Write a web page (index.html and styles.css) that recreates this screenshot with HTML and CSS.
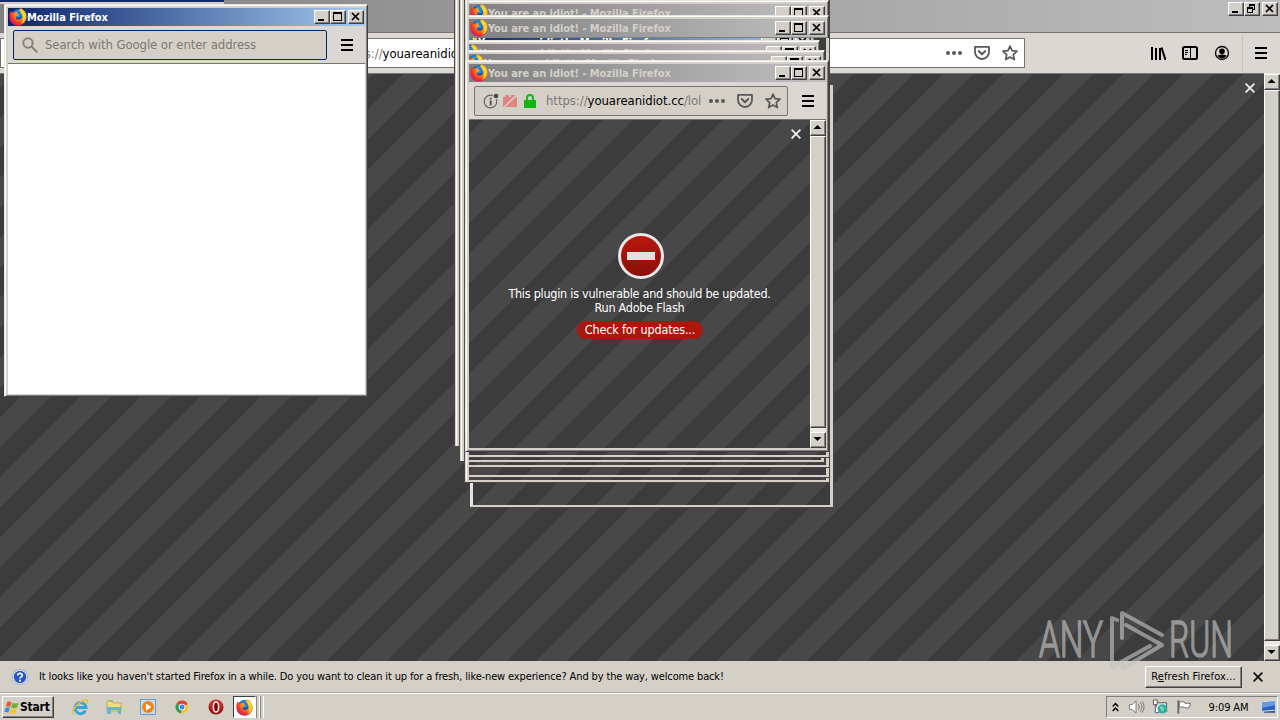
FILE: index.html
```html
<!DOCTYPE html>
<html lang="en">
<head>
	<meta charset="UTF-8">
	<title>You are an idiot! - Mozilla Firefox</title>
	<link rel="stylesheet" href="styles.css">
</head>
<body>
	<!-- shared icons -->
	<svg class="defs" width="0" height="0">
		<defs>
			<radialGradient id="fox" cx="70%" cy="25%" r="85%">
				<stop offset="0" stop-color="#ffe226"/>
				<stop offset=".4" stop-color="#ff980e"/>
				<stop offset=".75" stop-color="#f5302c"/>
				<stop offset="1" stop-color="#c3147d"/>
			</radialGradient>
			<radialGradient id="redball" cx="50%" cy="30%" r="70%">
				<stop offset="0" stop-color="#f0524a"/>
				<stop offset="1" stop-color="#8e0808"/>
			</radialGradient>
			<linearGradient id="stop" x1="0" y1="0" x2="0" y2="1">
				<stop offset="0" stop-color="#b8180f"/>
				<stop offset="1" stop-color="#8a0f08"/>
			</linearGradient>
		</defs>
		<symbol id="i-firefox" viewBox="0 0 16 16">
			<circle cx="8.3" cy="8" r="7" fill="#1b49a5"/>
			<circle cx="8" cy="5" r="3.6" fill="#1a86e0"/>
			<path fill="url(#fox)" d="M1.2 2.6 3 4.2C3.800 3.700 4.800 3.600 5.700 3.900L7.500 3 7.300 5 9 6.200 6.600 7.300 6 8.800C7 10.800 10.500 11 11.500 8.500 12.200 6.500 11 4 9 2.200 8.800 1 10.500.3 10.500.3 14 2 15.900 5 15.700 8.500 15.400 12.600 12.200 15.800 8 15.800 3.800 15.800.5 12.500.4 8.300.3 6 .6 4.300 1.200 2.600z"/>
			<path fill="#ffd52e" d="M11 1.500C14 3.500 15.500 6.500 14.800 9.800 14 12.500 12 13.800 10.500 14 13 11.500 13.700 7 11 1.500z"/>
		</symbol>
		<symbol id="i-min" viewBox="0 0 16 14"><path fill="#000" d="M4 9h6v2H4z"/></symbol>
		<symbol id="i-max" viewBox="0 0 16 14"><path fill="#000" fill-rule="evenodd" d="M3 2h9v9H3zM4 4v6h7V4z"/></symbol>
		<symbol id="i-restore" viewBox="0 0 16 14"><path fill="#000" fill-rule="evenodd" d="M5 2h6v6H9v3H3V5h2zM6 4v1h3v2h1V4zM4 7v3h4V7z"/></symbol>
		<symbol id="i-close" viewBox="0 0 16 14"><path stroke="#000" stroke-width="1.700" d="M4 3l7 7M11 3l-7 7"/></symbol>
		<symbol id="i-menu" viewBox="0 0 12 12"><path fill="#000" d="M0 0h12v2H0zM0 5h12v2H0zM0 10h12v2H0z"/></symbol>
		<symbol id="i-dots" viewBox="0 0 16 16"><g fill="#5a5856"><circle cx="2" cy="8" r="2"/><circle cx="8" cy="8" r="2"/><circle cx="14" cy="8" r="2"/></g></symbol>
		<symbol id="i-pocket" viewBox="0 0 16 16">
			<path fill="none" stroke="#5a5856" stroke-width="1.800" stroke-linejoin="round" d="M1 1.900h14V7a7 7 0 0 1-14 0z"/>
			<path fill="none" stroke="#5a5856" stroke-width="1.900" stroke-linecap="round" stroke-linejoin="round" d="M4.700 6 8 9.200 11.300 6"/>
		</symbol>
		<symbol id="i-star" viewBox="0 0 16 16"><path fill="none" stroke="#5a5856" stroke-width="1.700" stroke-linejoin="round" d="M8 1.100l2 4.600 5 .5-3.700 3.400 1.100 5L8 12l-4.400 2.600 1.100-5L1 6.200l5-.5z"/></symbol>
		<symbol id="i-up" viewBox="0 0 16 14"><path fill="#000" d="M7.500 5 11.500 9h-8z"/></symbol>
		<symbol id="i-down" viewBox="0 0 16 14"><path fill="#000" d="M3.500 5h8l-4 4z"/></symbol>
		<symbol id="i-x" viewBox="0 0 10 10"><path stroke="currentColor" stroke-width="1.800" d="M.6.6l8.800 8.800M9.400.6.6 9.400"/></symbol>
	</svg>

	<div class="desktop">
		<!-- maximised browser window -->
		<div class="main">
			<div class="main-title">
				<div class="btns">
					<span class="btn"><svg><use href="#i-min"/></svg></span><span class="btn"><svg><use href="#i-restore"/></svg></span><span class="btn gap"><svg><use href="#i-close"/></svg></span>
				</div>
			</div>
			<div class="main-bar">
				<div class="main-url">
					<span class="url"><i>https://</i>youareanidiot.cc</span>
					<svg class="ic"><use href="#i-dots"/></svg>
					<svg class="ic"><use href="#i-pocket"/></svg>
					<svg class="ic"><use href="#i-star"/></svg>
				</div>
				<div class="main-tools">
					<svg class="ic" viewBox="0 0 16 16"><path stroke="#000" stroke-width="2" d="M2 2v13M6 3v12M10 3v12M11.500 2.500 15.500 15"/></svg>
					<svg class="ic" viewBox="0 0 16 16"><path fill="none" stroke="#000" stroke-width="2" d="M2.500 2h11Q15 2 15 3.500v9q0 1.500-1.500 1.500h-11Q1 14 1 12.500v-9Q1 2 2.500 2z"/><path stroke="#000" d="M8.500 2v12M3 5.500h3M3 7.500h3M3 9.500h2"/></svg>
					<svg class="ic" viewBox="0 0 16 16"><circle cx="8" cy="8" r="6.500" fill="none" stroke="#000" stroke-width="1.300"/><circle cx="8" cy="6.200" r="2.800"/><path d="M3.500 10.500q4.500-2 9 0-1.500 3-4.500 3t-4.500-3z"/></svg>
					<span class="sep"></span>
					<svg class="menu"><use href="#i-menu"/></svg>
				</div>
			</div>
			<div class="main-view">
				<div class="stripes main-page"><svg class="x"><use href="#i-x"/></svg></div>
				<div class="scroll">
					<span class="btn"><svg><use href="#i-up"/></svg></span>
					<span class="thumb"></span>
					<span class="track"></span>
					<span class="btn"><svg><use href="#i-down"/></svg></span>
				</div>
			</div>
			<div class="notice">
				<svg class="help" viewBox="0 0 16 16"><circle cx="8" cy="8" r="7.500" fill="#eef2fa" stroke="#9db0d4"/><circle cx="8" cy="8" r="6.200" fill="#2456c4"/><path fill="none" stroke="#fff" stroke-width="1.700" d="M5.700 6.400C5.700 3.700 10.300 3.700 10.300 6.300 10.300 8 8 7.800 8 9.600"/><path fill="#fff" d="M7 10.700h2v1.800H7z"/></svg>
				<span class="notice-text">It looks like you haven't started Firefox in a while. Do you want to clean it up for a fresh, like-new experience? And by the way, welcome back!</span>
				<span class="refresh">R<u>e</u>fresh Firefox...</span>
				<svg class="x dark"><use href="#i-x"/></svg>
			</div>
		</div>
		<div class="strip"></div>

		<!-- trails left by the bouncing popups -->
		<div class="frame stripes f1"></div>
		<div class="frame stripes f2"></div>
		<div class="frame stripes f3"></div>
		<div class="frame stripes f4"></div>
		<div class="frame stripes f5"></div>
		<div class="frame stripes f6"></div>
		<div class="frame stripes f7"></div>
		<div class="frame stripes f8"></div>

		<div class="win w1">
			<div class="title"><svg class="fox"><use href="#i-firefox"/></svg><span>You are an idiot! - Mozilla Firefox</span>
				<div class="btns"><span class="btn"><svg><use href="#i-min"/></svg></span><span class="btn"><svg><use href="#i-max"/></svg></span><span class="btn gap"><svg><use href="#i-close"/></svg></span></div>
			</div>
		</div>
		<div class="win active w3">
			<div class="title"><svg class="fox"><use href="#i-firefox"/></svg><span>You are an idiot! - Mozilla Firefox</span>
				<div class="btns"><span class="btn"><svg><use href="#i-min"/></svg></span><span class="btn"><svg><use href="#i-max"/></svg></span><span class="btn gap"><svg><use href="#i-close"/></svg></span></div>
			</div>
		</div>
		<div class="win w2">
			<div class="title"><svg class="fox"><use href="#i-firefox"/></svg><span>You are an idiot! - Mozilla Firefox</span>
				<div class="btns"><span class="btn"><svg><use href="#i-min"/></svg></span><span class="btn"><svg><use href="#i-max"/></svg></span><span class="btn gap"><svg><use href="#i-close"/></svg></span></div>
			</div>
		</div>
		<div class="win w4">
			<div class="title"><svg class="fox"><use href="#i-firefox"/></svg><span>You are an idiot! - Mozilla Firefox</span>
				<div class="btns"><span class="btn"><svg><use href="#i-min"/></svg></span><span class="btn"><svg><use href="#i-max"/></svg></span><span class="btn gap"><svg><use href="#i-close"/></svg></span></div>
			</div>
		</div>
		<div class="win w5">
			<div class="title"><svg class="fox"><use href="#i-firefox"/></svg><span>You are an idiot! - Mozilla Firefox</span>
				<div class="btns"><span class="btn"><svg><use href="#i-min"/></svg></span><span class="btn"><svg><use href="#i-max"/></svg></span><span class="btn gap"><svg><use href="#i-close"/></svg></span></div>
			</div>
		</div>
		<div class="edge e1"></div>
		<div class="edge e2"></div>
		<div class="edge e3"></div>

		<!-- front popup -->
		<div class="win popup">
			<div class="title"><svg class="fox"><use href="#i-firefox"/></svg><span>You are an idiot! - Mozilla Firefox</span>
				<div class="btns"><span class="btn"><svg><use href="#i-min"/></svg></span><span class="btn"><svg><use href="#i-max"/></svg></span><span class="btn gap"><svg><use href="#i-close"/></svg></span></div>
			</div>
			<div class="bar">
				<div class="field">
					<svg class="ic info" viewBox="0 0 16 16"><circle cx="7.500" cy="8.500" r="6.300" fill="none" stroke="#6a6866" stroke-width="1.200"/><path fill="#5a5856" d="M6.700 7.500h2v5h-2zM6.700 4.700h2v1.800h-2z"/><circle cx="13" cy="3" r="3.200" fill="#d4d0c8"/><circle cx="13" cy="3" r="2.300" fill="#4a4846"/></svg>
					<svg class="ic plug" viewBox="0 0 16 16"><path fill="#dd8580" d="M1 4h2V2h4v2h2V2h4v2h2v10H1z"/><path stroke="#d4d0c8" stroke-width="1.500" d="M1 15 15 2"/></svg>
					<svg class="ic lock" viewBox="0 0 16 16"><path fill="#12b612" d="M2 7h12v8H2z"/><path fill="none" stroke="#12b612" stroke-width="2" d="M5 8V5a3 3 0 0 1 6 0v3"/></svg>
					<span class="url"><i>https://</i>youareanidiot.cc<i>/lol</i></span>
					<svg class="ic"><use href="#i-dots"/></svg>
					<svg class="ic"><use href="#i-pocket"/></svg>
					<svg class="ic"><use href="#i-star"/></svg>
				</div>
				<svg class="menu"><use href="#i-menu"/></svg>
			</div>
			<div class="view">
				<div class="stripes page">
					<svg class="x"><use href="#i-x"/></svg>
					<svg class="blocked" viewBox="0 0 46 46"><circle cx="23" cy="23" r="21.500" fill="url(#stop)" stroke="#ece9e8" stroke-width="3"/><path fill="#e4e0e2" d="M9 19h28v8H9z"/></svg>
					<p>This plugin is vulnerable and should be updated.<br>Run Adobe Flash</p>
					<a class="check">Check for updates...</a>
				</div>
				<div class="scroll">
					<span class="btn"><svg><use href="#i-up"/></svg></span>
					<span class="thumb"></span>
					<span class="track"></span>
					<span class="btn"><svg><use href="#i-down"/></svg></span>
				</div>
			</div>
		</div>

		<!-- empty popup -->
		<div class="win active blank">
			<div class="title"><svg class="fox"><use href="#i-firefox"/></svg><span>Mozilla Firefox</span>
				<div class="btns"><span class="btn"><svg><use href="#i-min"/></svg></span><span class="btn"><svg><use href="#i-max"/></svg></span><span class="btn gap"><svg><use href="#i-close"/></svg></span></div>
			</div>
			<div class="bar">
				<div class="field search">
					<svg class="ic" viewBox="0 0 16 16"><circle cx="6" cy="6" r="4.700" fill="none" stroke="#86827e" stroke-width="2"/><path stroke="#86827e" stroke-width="2.200" d="M9.500 9.500 15.300 15.300"/></svg>
					<span class="hint">Search with Google or enter address</span>
				</div>
				<svg class="menu"><use href="#i-menu"/></svg>
			</div>
			<div class="white"></div>
		</div>

		<svg class="watermark" viewBox="0 0 220 66">
			<text x="3" y="50" textLength="64" lengthAdjust="spacingAndGlyphs">ANY</text>
			<text x="133" y="50" textLength="64" lengthAdjust="spacingAndGlyphs">RUN</text>
			<g fill="none" stroke="#c4c4c4" stroke-width="4" stroke-linejoin="round" stroke-linecap="round">
				<path d="M81 13 76 11V60L114 39"/>
				<path d="M86 31V6L126 28"/>
				<path d="M90 18 126 38 87 61V57"/>
			</g>
		</svg>

		<div class="taskbar">
			<div class="start">
				<svg viewBox="0 0 17 15"><path fill="#e8562a" d="M3.500 1.500Q6 .5 8 2L6.500 7Q4.500 5.700 2 6.500z"/><path fill="#6cb33e" d="M9 2.500q3 1.500 6.500 0L14 7.500q-3.500 1.500-6.500 0z"/><path fill="#3f8fe0" d="M1.700 7.700q2.500-1 4.500.3L4.700 13q-2-1.300-4.400-.5z"/><path fill="#fbc52d" d="M7.200 8.500q3 1.500 6.500 0l-1.500 5q-3.500 1.500-6.500 0z"/></svg>
				<b>Start</b>
			</div>
			<div class="quick">
				<svg viewBox="0 0 18 18"><path fill="none" stroke="#35a5dc" stroke-width="3" d="M14.500 12.500A5.500 5.500 0 1 1 15 9.500H5"/><path fill="none" stroke="#e8bf35" stroke-width="1.500" d="M2 16C-1 13 8 3 15 1.800 17.500 1.700 17 4 16 5.500"/></svg>
				<svg viewBox="0 0 18 18"><path fill="#f2dc85" stroke="#cda94a" d="M2 3h5l1 2h8v8H2z"/><path fill="#69b5d8" d="M2 9h14v7h-3v-4H6v4H2z"/><path fill="#8fc45a" d="M4 2h4v2H4z"/></svg>
				<svg viewBox="0 0 18 18"><path fill="#c4dcf0" stroke="#6a9ac8" d="M1.500 1.500h15v15h-15z"/><circle cx="9" cy="9" r="6" fill="#f58413"/><path fill="#fff" d="M7 5.500 12.500 9 7 12.500z"/></svg>
				<svg viewBox="0 0 18 18"><circle cx="9" cy="9" r="6.500" fill="#f7c52b"/><path fill="#db4437" d="M9 9 3.400 5.700A6.500 6.500 0 0 1 14.700 6z"/><path fill="#25a05a" d="M9 9 3.400 5.700A6.500 6.500 0 0 0 8 15.400z"/><circle cx="9" cy="9" r="3.300" fill="#fff"/><circle cx="9" cy="9" r="2.500" fill="#4285f4"/></svg>
				<svg viewBox="0 0 18 18"><circle cx="9" cy="9" r="7.500" fill="url(#redball)"/><ellipse cx="9" cy="9" rx="2.600" ry="5" fill="#7a0a0a" stroke="#f4e4e4" stroke-width="1.500"/></svg>
			</div>
			<div class="task"><svg><use href="#i-firefox"/></svg></div>
			<span class="stack"></span><span class="stack"></span>
			<div class="tray">
				<svg class="chev" viewBox="0 0 7 10"><path fill="none" stroke="#000" stroke-width="1.500" d="M.7 4.500l2.800-3 2.800 3M.7 9l2.800-3 2.800 3"/></svg>
				<svg viewBox="0 0 18 16"><path fill="#fff" stroke="#777" d="M1.500 5.500h3l4-4v13l-4-4h-3z"/><path fill="none" stroke="#777" d="M11 5q2 3 0 6M13 3q3.500 5 0 10M15 2q4 6 0 12"/></svg>
				<svg viewBox="0 0 18 16"><path fill="#e8e8e8" stroke="#555" d="M4.500 3.500h11v9h-11z"/><path fill="#fff" stroke="#555" d="M1.500.5h4v5h-4zM3.500 6v8h4"/><circle cx="11" cy="10" r="5" fill="#31aeb0"/><path fill="#8fd6a0" d="M8 8l3-1 2 3-2 3z"/></svg>
				<svg viewBox="0 0 18 16"><path stroke="#666" stroke-width="2" d="M2.500 1v14"/><path fill="#fff" stroke="#666" d="M3.500 2.500h5l1 1.500h6l-2 5h-4l-1-1h-5z"/></svg>
				<span class="clock">9:09 AM</span>
				<svg viewBox="0 0 18 16"><path fill="#2c62c0" stroke="#dfe6f2" d="M1.500 2.500 16.500 1.500v10l-15 1z"/><path fill="#6b9ae2" d="M2 3l14-1v4L2 9z"/><path fill="#34507f" d="M3 13l13-1v2H5z"/></svg>
			</div>
		</div>
	</div>
</body>
</html>
```
FILE: styles.css
```css
* { box-sizing: border-box; }
body { margin: 0; background: #d4d0c8; font: 11px "DejaVu Sans Condensed", "DejaVu Sans", sans-serif; color: #000; }
svg { display: block; flex: none; }
i { font-style: normal; color: #7b7875; }
p { margin: 0; }
.defs { position: absolute; }
.desktop { position: relative; width: 1280px; height: 720px; overflow: hidden; display: flex; flex-direction: column; }

.stripes {
	background-color: #3c3c3c;
	background-image: linear-gradient(135deg, #484848 25%, #3c3c3c 25%, #3c3c3c 50%, #484848 50%, #484848 75%, #3c3c3c 75%);
	background-size: 60px 60px;
}

/* buttons */
.btns { display: flex; margin-left: auto; }
.btn { width: 16px; height: 14px; flex: none; background: #d4d0c8; border: 1px solid; border-color: #fff #404040 #404040 #fff; box-shadow: inset -1px -1px #808080; }
.btn svg { width: 16px; height: 14px; margin: -1px; }
.gap { margin-left: 2px; }
.ic { width: 16px; height: 16px; }
.menu { width: 12px; height: 12px; }
.x { width: 10px; height: 10px; color: #eee; }
.x.dark { color: #111; }

/* scrollbar */
.scroll { width: 16px; display: flex; flex-direction: column; background: #ebe8e3; }
.scroll .btn { height: 16px; }
.thumb { flex: 1; background: #d4d0c8; border: 1px solid; border-color: #fff #404040 #404040 #fff; box-shadow: inset -1px -1px #808080; }
.track { height: 4px; }

/* main window */
.main { height: 693px; display: flex; flex-direction: column; }
.main-title { height: 33px; padding: 2px 2px 0; background: linear-gradient(90deg, #808080, #bdbdbd); border-bottom: 1px solid #77736f; display: flex; }
.main-bar { height: 40px; background: #dbd7d2; display: flex; align-items: center; }
.main-url { width: 1025px; height: 30px; background: #fff; border: 1px solid #77736f; display: flex; align-items: center; padding: 0 6px 0 340px; gap: 12px; }
.url { font-size: 13px; letter-spacing: -.05px; white-space: nowrap; overflow: hidden; }
.main-url .url { flex: 1; }
.main-tools { flex: 1; display: flex; align-items: center; justify-content: flex-end; gap: 16px; padding-right: 13px; }
.sep { width: 1px; height: 36px; background: #c5c1bb; margin: 0 -4px 0 -4px; }
.main-view { height: 588px; display: flex; }
.main-page { flex: 1; background-position: 0 -16px; border-top: 1px solid #777; display: flex; justify-content: flex-end; padding: 9px 9px; }
.main-view .scroll { padding-top: 1px; }
.notice { flex: 1; display: flex; align-items: center; padding: 0 17px 0 12px; border-bottom: 1px solid #aaa69f; }
.help { width: 16px; height: 16px; }
.notice-text { margin-left: 11px; white-space: nowrap; letter-spacing: -.14px; }
.refresh { margin-left: auto; margin-right: 11px; width: 97px; height: 22px; line-height: 20px; text-align: center; letter-spacing: .1px; border: 1px solid; border-color: #fff #404040 #404040 #fff; box-shadow: inset -1px -1px #808080; white-space: nowrap; }
/* start of an active caption showing at the very top */
.strip { position: absolute; left: 0; top: 0; width: 224px; height: 4px; background: #d4d0c8; border-top: 2px solid #14286a; }

/* popups */
.win { position: absolute; width: 364px; height: 392px; padding: 3px 2px 3px 3px; background: #d4d0c8; border: 1px solid; border-color: #e8e5e0 #404040 #404040 #e8e5e0; box-shadow: inset 1px 1px #fff, inset -1px -1px #808080; display: flex; flex-direction: column; overflow: hidden; }
.title { height: 18px; flex: none; background: linear-gradient(90deg, #808080, #c0c0c0); display: flex; align-items: center; color: #d4d0c8; font-weight: bold; white-space: nowrap; padding: 0 1px 0 1px; letter-spacing: -.07px; }
.active .title { background: linear-gradient(90deg, #0a246a, #a6caf0); color: #fff; }
.fox { width: 18px; height: 18px; }
.bar { height: 38px; flex: none; display: flex; align-items: center; justify-content: space-between; padding: 0 13px 0 5px; background: #dbd7d2; border-bottom: 1px solid #77736f; }
.field { width: 314px; height: 30px; border: 1px solid #77736f; border-radius: 2px; background: #d4d0c8; display: flex; align-items: center; gap: 12px; padding: 0 6px 0 8px; }
.field .info { margin-right: -9px; }
.field .plug { margin-right: -8px; }
.field .lock { margin-right: -4px; }
.field .url { flex: 1; margin-right: -6px; }
.search { border-color: #0a246a; gap: 7px; }
.hint { font-size: 13px; color: #7b7875; letter-spacing: -.08px; white-space: nowrap; }
.white { flex: 1; background: #fff; }
.view { flex: 1; display: flex; }
.page { flex: 1; background-position: 14px 0; color: #fff; font-size: 12.500px; line-height: 14px; text-align: center; display: flex; flex-direction: column; align-items: center; }
.page .x { align-self: flex-end; margin: 9px 9px 0 0; }
.blocked { width: 46px; height: 46px; margin: 94px 0 8px 3px; }
.page p { letter-spacing: -.25px; white-space: nowrap; }
.check { margin: 6px 0 0 1px; width: 126px; height: 18px; line-height: 18px; border-radius: 9px; background: #ad160c; letter-spacing: -.15px; }

.blank { left: 4px; top: 4px; height: 393px; }
.blank .white { margin-bottom: -1px; }
.popup { left: 465px; top: 60px; }
.popup .menu { margin-right: -1px; }
.blank .menu { margin-right: -1px; }
.w1 { left: 465px; top: 0; height: 17px; border-bottom: 0; }
.w2 { left: 465px; top: 15px; height: 23px; border-bottom: 0; }
.w3 { left: 455px; top: 29px; width: 360px; height: 12px; border-bottom: 0; }
.w4 { left: 456px; top: 40px; height: 11px; border-bottom: 0; }
.w5 { left: 461px; top: 50px; height: 11px; border-bottom: 0; }

/* trails */
.frame { position: absolute; border: 3px solid #d4d0c8; border-left-color: #e6e3df; border-bottom-width: 2px; outline: 1px solid #4a4644; }
.f1 { left: 470px; top: 85px; width: 363px; height: 422px; }
.f2 { left: 455px; top: -10px; width: 363px; height: 456px; }
.f3 { left: 460px; top: -10px; width: 363px; height: 471px; }
.f4 { left: 465px; top: -10px; width: 364px; height: 492px; }
.f5 { left: 465px; top: -10px; width: 364px; height: 487px; }
.f6 { left: 465px; top: -10px; width: 364px; height: 477px; }
.f7 { left: 465px; top: -10px; width: 359px; height: 472px; }
.f8 { left: 465px; top: -10px; width: 364px; height: 467px; }
.edge { position: absolute; top: 0; width: 5px; background: linear-gradient(90deg, #d4d0c8 1px, #fff 1px, #fff 2px, #d4d0c8 2px, #d4d0c8 4px, #55504c 4px); }
.e1 { left: 455px; height: 446px; }
.e2 { left: 460px; height: 461px; }
.e3 { left: 465px; width: 4px; height: 481px; }

.watermark { position: absolute; left: 1036px; top: 607px; width: 220px; height: 66px; opacity: .62; }
.watermark text { font: 300 50px Roboto, sans-serif; fill: #c9c9c9; stroke: #c9c9c9; stroke-width: 1.600; }

/* taskbar */
.taskbar { height: 27px; border-top: 1px solid #fff; background: #d4d0c8; display: flex; align-items: center; padding: 1px 2px; }
.start { width: 52px; height: 22px; border: 1px solid; border-color: #fff #404040 #404040 #fff; box-shadow: inset -1px -1px #808080; display: flex; align-items: center; padding-left: 1px; font-size: 12px; letter-spacing: -.2px; }
.start svg { width: 16px; height: 15px; }
.quick { display: flex; gap: 16px; margin: 0 8px 0 17px; }
.quick svg { width: 18px; height: 18px; }
.task { width: 23px; height: 22px; background: #fff; border: 1px solid; border-color: #404040 #fff #fff #404040; display: flex; align-items: center; justify-content: center; }
.task svg { width: 17px; height: 17px; }
.stack { width: 4px; height: 22px; border-right: 1px solid #fff; border-left: 1px solid #8a8680; }
.tray { margin-left: auto; width: 172px; height: 22px; border: 1px solid; border-color: #808080 #fff #fff #808080; display: flex; align-items: center; gap: 7px; padding-left: 5px; white-space: nowrap; }
.tray svg { width: 17px; height: 16px; }
.tray .chev { width: 7px; height: 10px; margin-right: 2px; }
.clock { flex: 1; text-align: center; padding-left: 4px; letter-spacing: -.1px; }
```
